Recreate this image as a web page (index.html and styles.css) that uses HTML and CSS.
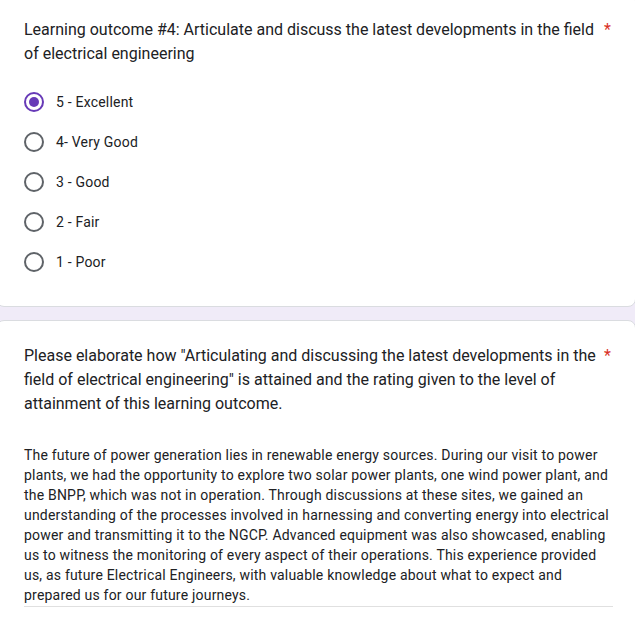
FILE: index.html
```html
<!DOCTYPE html>
<html>
<head>
<meta charset="utf-8">
<link rel="stylesheet" href="styles.css">
</head>
<body>
<div class="page">
  <div class="card card-first">
    <div class="title">
      <span class="title-text">Learning outcome #4: Articulate and discuss the latest developments in the field of electrical engineering</span>
      <span class="req">*</span>
    </div>
    <div class="options">
      <div class="option"><span class="radio checked"></span><span class="label">5 - Excellent</span></div>
      <div class="option"><span class="radio"></span><span class="label">4- Very Good</span></div>
      <div class="option"><span class="radio"></span><span class="label">3 - Good</span></div>
      <div class="option"><span class="radio"></span><span class="label">2 - Fair</span></div>
      <div class="option"><span class="radio"></span><span class="label">1 - Poor</span></div>
    </div>
  </div>
  <div class="card card-second">
    <div class="title">
      <span class="title-text">Please elaborate how "Articulating and discussing the latest developments in the field of electrical engineering" is attained and the rating given to the level of attainment of this learning outcome.</span>
      <span class="req">*</span>
    </div>
    <div class="answer">The future of power generation lies in renewable energy sources. During our visit to power plants, we had the opportunity to explore two solar power plants, one wind power plant, and the BNPP, which was not in operation. Through discussions at these sites, we gained an understanding of the processes involved in harnessing and converting energy into electrical power and transmitting it to the NGCP. Advanced equipment was also showcased, enabling us to witness the monitoring of every aspect of their operations. This experience provided us, as future Electrical Engineers, with valuable knowledge about what to expect and prepared us for our future journeys.</div>
  </div>
</div>
</body>
</html>
```
FILE: styles.css
```css
html, body {
  margin: 0;
  padding: 0;
  background: #f0ebf8;
  font-family: Roboto, "Liberation Sans", Arial, sans-serif;
  color: #202124;
  overflow: hidden;
}
.page {
  display: flex;
  flex-direction: column;
  gap: 13px;
  margin-top: -7px;
  margin-left: -4px;
  width: 640px;
}
.card {
  background: #fff;
  border: 1px solid #dadce0;
  border-radius: 8px;
  padding: 24px 24px 24px 27px;
}
.card-first {
  padding-top: 24px;
}
.card-second {
  padding-top: 23px;
  height: 400px;
}
.title {
  display: flex;
  align-items: flex-start;
  font-size: 16px;
  line-height: 24px;
}
.title-text {
  flex: 1;
}
.req {
  color: #d93025;
  padding-left: 8px;
}
.options {
  margin-top: 16px;
  display: flex;
  flex-direction: column;
}
.option {
  height: 40px;
  display: flex;
  align-items: center;
}
.radio {
  box-sizing: border-box;
  width: 20px;
  height: 20px;
  border: 2px solid #5f6368;
  border-radius: 50%;
  margin-right: 12px;
  display: flex;
  align-items: center;
  justify-content: center;
}
.radio.checked {
  border-color: #673ab7;
}
.radio.checked::after {
  content: "";
  width: 10px;
  height: 10px;
  border-radius: 50%;
  background: #673ab7;
}
.label {
  font-size: 14px;
  letter-spacing: 0.2px;
  line-height: 20px;
}
.answer {
  margin-top: 29px;
  margin-right: -2px;
  font-size: 14px;
  line-height: 20px;
  letter-spacing: 0.2px;
  padding-bottom: 1px;
  border-bottom: 1px solid #e0e0e0;
}
```
